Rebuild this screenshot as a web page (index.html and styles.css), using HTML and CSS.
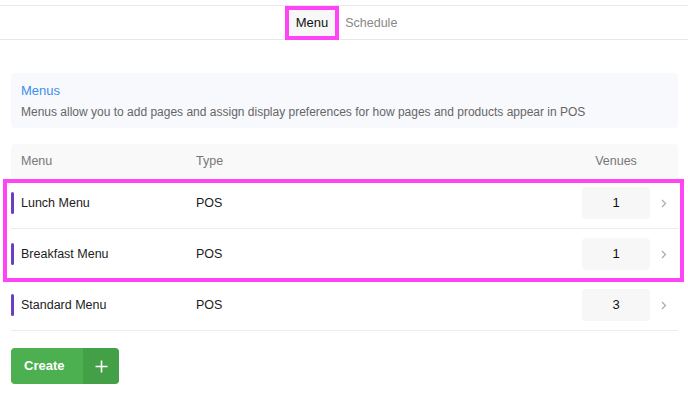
FILE: index.html
```html
<!DOCTYPE html>
<html lang="en">
<head>
    <meta charset="UTF-8">
    <meta name="viewport" content="width=device-width, initial-scale=1.0">
    <title>Menus</title>
    <link rel="stylesheet" href="styles.css">
</head>
<body>
    <nav class="tabs">
        <a class="tab active">Menu</a>
        <a class="tab">Schedule</a>
    </nav>

    <main class="content">
        <div class="info">
            <div class="info-title">Menus</div>
            <div class="info-text">Menus allow you to add pages and assign display preferences for how pages and products appear in POS</div>
        </div>

        <div class="table">
            <div class="row head">
                <div class="cell-name">Menu</div>
                <div>Type</div>
                <div class="cell-venues">Venues</div>
                <div></div>
            </div>

            <div class="group marked">
                <div class="row">
                    <div class="cell-name"><span class="bar"></span>Lunch Menu</div>
                    <div>POS</div>
                    <div class="cell-venues"><span class="count">1</span></div>
                    <div class="chev"><svg width="6" height="9" viewBox="0 0 6 9"><path d="M1 1l3.5 3.5L1 8" stroke="#aaa" stroke-width="1.2" fill="none"/></svg></div>
                </div>
                <div class="row">
                    <div class="cell-name"><span class="bar"></span>Breakfast Menu</div>
                    <div>POS</div>
                    <div class="cell-venues"><span class="count">1</span></div>
                    <div class="chev"><svg width="6" height="9" viewBox="0 0 6 9"><path d="M1 1l3.5 3.5L1 8" stroke="#aaa" stroke-width="1.2" fill="none"/></svg></div>
                </div>
            </div>

            <div class="row">
                <div class="cell-name"><span class="bar"></span>Standard Menu</div>
                <div>POS</div>
                <div class="cell-venues"><span class="count">3</span></div>
                <div class="chev"><svg width="6" height="9" viewBox="0 0 6 9"><path d="M1 1l3.5 3.5L1 8" stroke="#aaa" stroke-width="1.2" fill="none"/></svg></div>
            </div>
        </div>

        <button class="create" type="button">
            <span class="create-label">Create</span>
            <span class="create-plus">
                <svg width="13" height="13" viewBox="0 0 13 13"><path d="M6.5 0.5v12M0.5 6.5h12" stroke="#fff" stroke-width="1.6" fill="none"/></svg>
            </span>
        </button>
    </main>
</body>
</html>
```

FILE: styles.css
```css
body {
    margin: 0;
    font-family: "Liberation Sans", Arial, sans-serif;
    font-size: 12.5px;
    color: #1c1c1c;
    background-color: #fff;
}
.tabs {
    display: flex;
    justify-content: center;
    margin-top: 5px;
    height: 33px;
    border-top: 1px solid #e8e8e8;
    border-bottom: 1px solid #e8e8e8;
}
.tab {
    display: flex;
    align-items: center;
    padding: 0 6px;
    font-size: 12.5px;
    color: #888;
}
.tab.active {
    position: relative;
    padding: 0 11px;
    font-size: 13px;
    color: #111;
    background-color: #f7f7f7;
}
/* annotation box */
.tab.active::after {
    content: "";
    position: absolute;
    inset: 0 0 -1px 0;
    border: 4px solid #ff44f6;
}
.content {
    padding: 33px 10px 0 11px;
}
.info {
    height: 55px;
    padding: 0 10px;
    background-color: #f8f9fc;
    border-radius: 4px;
    display: flex;
    flex-direction: column;
    justify-content: center;
    gap: 7px;
}
.info-title {
    color: #3d8ef0;
    font-size: 13px;
}
.info-text {
    color: #666;
    font-size: 12px;
}
.table {
    margin-top: 16px;
}
.row {
    display: grid;
    grid-template-columns: 185px 1fr 68px 28px;
    align-items: center;
    height: 50px;
    border-bottom: 1px solid #ececec;
}
.row.head {
    height: 34px;
    border-bottom: none;
    background-color: #f9f9f9;
    border-radius: 4px;
    color: #777;
}
.row.head .cell-name {
    padding-left: 10px;
}
.cell-name {
    display: flex;
    align-items: center;
}
.bar {
    width: 3px;
    height: 22px;
    margin-right: 7px;
    border-radius: 2px;
    background-color: #6a3fc1;
}
.cell-venues {
    text-align: center;
}
.count {
    display: block;
    height: 32px;
    line-height: 32px;
    border-radius: 4px;
    background-color: #f7f7f7;
    font-size: 13px;
    color: #111;
}
.chev {
    display: flex;
    justify-content: center;
}
.group {
    position: relative;
}
/* annotation box */
.group.marked::after {
    content: "";
    position: absolute;
    top: 1px;
    bottom: -2px;
    left: -8px;
    right: -6px;
    border: 4px solid #ff44f6;
}
.create {
    display: flex;
    margin-top: 17px;
    padding: 0;
    height: 36px;
    border: none;
    border-radius: 4px;
    overflow: hidden;
    font-family: inherit;
    cursor: pointer;
}
.create-label {
    width: 72px;
    box-sizing: border-box;
    padding-left: 13px;
    text-align: left;
    line-height: 36px;
    background-color: #4caf50;
    color: #fff;
    font-size: 13px;
    font-weight: bold;
}
.create-plus {
    width: 36px;
    display: flex;
    align-items: center;
    justify-content: center;
    background-color: #43a047;
}
```
